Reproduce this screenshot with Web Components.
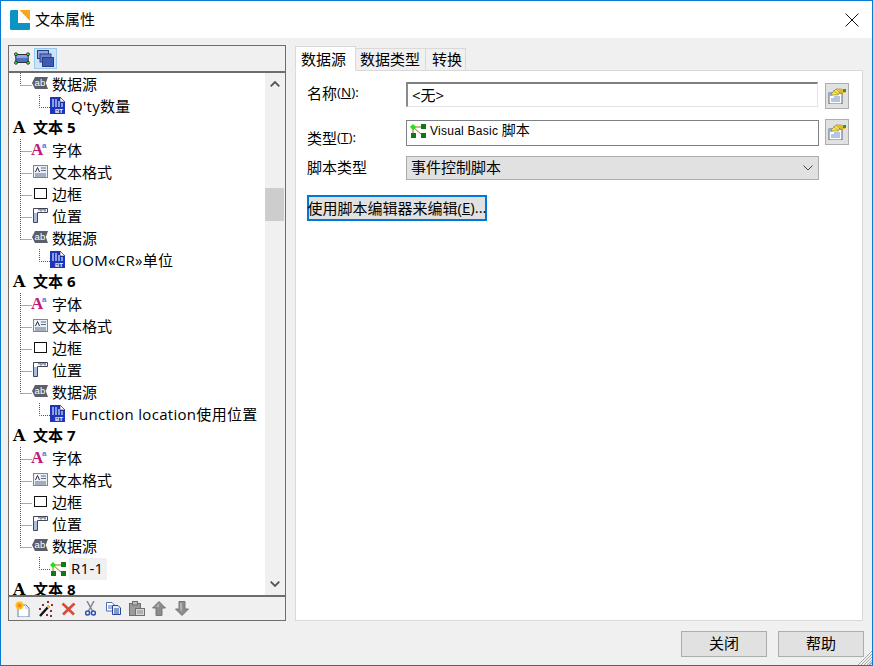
<!DOCTYPE html>
<html lang="zh">
<head>
<meta charset="utf-8">
<title>文本属性</title>
<style>
  html, body { margin: 0; padding: 0; background: #f0f0f0; }
  body { font: 15px "Open Sans", "Noto Sans CJK SC", sans-serif; color: #000; }
</style>
</head>
<body>

<script>
// icon drawings, all on a 16x16 box unless noted
const ICONS = {
  logo: `<svg width="20" height="20" viewBox="0 0 20 20"><rect width="20" height="20" rx="1.5" fill="#0b93c4"/><path d="M8 0H20V13H8Q8 13 8 12Z" fill="#fff"/><path d="M9.5 0H20V11Z" fill="#f5a623"/></svg>`,
  close: `<svg width="14" height="14" viewBox="0 0 14 14"><path d="M.5.5 13.5 13.5M13.5.5.5 13.5" stroke="#111" stroke-width="1" fill="none"/></svg>`,
  frame: `<svg width="16" height="13" viewBox="0 0 18 14"><rect x="2" y="2.5" width="14" height="9" fill="#4d6fc4"/><rect x="2" y="2.5" width="14" height="4" fill="#8ea6de"/><path d="M2 2.5H16V11.5H2Z" fill="none" stroke="#222"/><g fill="#3fe04a" stroke="#111" stroke-width=".8"><circle cx="2.2" cy="2.2" r="1.7"/><circle cx="15.8" cy="2.2" r="1.7"/><circle cx="2.2" cy="11.8" r="1.7"/><circle cx="15.8" cy="11.8" r="1.7"/></g></svg>`,
  stack: `<svg width="17" height="17" viewBox="0 0 17 17"><g stroke="#2b3f86"><rect x=".5" y=".5" width="11" height="8" fill="#8fa3dd"/><rect x="3" y="4" width="11" height="8" fill="#6a84cf"/><rect x="5.5" y="7.5" width="11" height="9" fill="#3d5ab5"/></g></svg>`,
  ab: `<svg width="16" height="12" viewBox="0 0 16 12"><path d="M3 0H16L13.8 6 16 12H3L0 6Z" fill="#5a5f6b"/><text x="2.6" y="9.2" font-family="'Liberation Sans',sans-serif" font-size="9.5" fill="#fff">ab</text></svg>`,
  doc: `<svg width="16" height="17" viewBox="0 0 16 17"><path d="M0 0H10L15 5V17H0Z" fill="#1c36b8"/><path d="M10 0 15 5H10Z" fill="#fff" stroke="#223" stroke-width=".6"/><path d="M3 2V10M6 2V10M9 4V10M12 6V10" stroke="#d8e2ff" stroke-width="1.2"/><text x="5" y="16" font-family="'Liberation Sans',sans-serif" font-size="6" font-weight="700" fill="#fff">BT</text></svg>`,
  script: `<svg width="16" height="14" viewBox="0 0 16 14"><path d="M3 3H13M3 3 12 11M3 3V11" stroke="#8a7a10" stroke-width="1" fill="none"/><path d="M3 0 6 3 3 6 0 3Z" fill="#19e619"/><rect x="11" y="0" width="5" height="5" fill="#0d7a17"/><rect x="1" y="9" width="5" height="5" fill="#0d7a17"/><rect x="11" y="9" width="5" height="5" fill="#0d7a17"/></svg>`,
  font: `<svg width="18" height="22" viewBox="0 0 18 22"><text x="0" y="17" font-family="'Liberation Serif',serif" font-size="17" font-weight="700" fill="#c2187a">A</text><text x="11" y="10" font-family="'Liberation Sans',sans-serif" font-size="8" font-weight="700" fill="#4a7be0">a</text></svg>`,
  format: `<svg width="15" height="13" viewBox="0 0 15 13"><rect x=".5" y=".5" width="14" height="12" fill="#e9eef7" stroke="#7d8798"/><rect x="2" y="2" width="5" height="5" fill="#fff"/><path d="M2.5 7 4.5 2.5 6.5 7" stroke="#223" fill="none"/><path d="M8 3H13M8 5.5H13M2 9H13M2 11H13" stroke="#5f6f8c"/></svg>`,
  border: `<svg width="13" height="11" viewBox="0 0 13 11"><rect x=".5" y=".5" width="12" height="10" fill="#fff" stroke="#111"/></svg>`,
  pos: `<svg width="15" height="15" viewBox="0 0 15 15"><path d="M.5.5H14.5V4.5H4.5V14.5H.5Z" fill="#fff" stroke="#2b3148" stroke-width=".9"/><path d="M6 .5V2.5M8 .5V3.5M10 .5V2.5M12 .5V3.5" stroke="#2b3148"/><rect x="1" y="5" width="3" height="9" fill="#a9bde0"/></svg>`,
  browse: `<svg width="18" height="16" viewBox="0 0 18 16"><rect x="1" y="5" width="13" height="11" fill="#fff" stroke="#5a6478"/><rect x="1" y="5" width="3.5" height="3" fill="#8fb3e0"/><path d="M6 9H12M3 11H12M3 13H12" stroke="#6e8cc0"/><path d="M3 6 8 1H14L10 7H5Z" fill="#f2e15c" stroke="#8a7a22" stroke-width=".6"/><path d="M5 2 11 7M8 1 13 6" stroke="#8a7a22" stroke-width=".5"/><path d="M9 1H14L18 2 17 5 13 5Z" fill="#e8b820"/><rect x="15" y="1" width="3" height="3" fill="#2f9a2f"/></svg>`,
  add: `<svg width="15" height="16" viewBox="0 0 15 16"><path d="M3 4H11L14 7V16H3Z" fill="#fff" stroke="#5f7fa8"/><path d="M10 4V8H14Z" fill="#cfe0f2"/><circle cx="4.5" cy="4.5" r="4" fill="#fbc21f"/><circle cx="4.5" cy="4.5" r="2" fill="#f28a1a"/></svg>`,
  wand: `<svg width="15" height="16" viewBox="0 0 15 16"><path d="M2 15 11 5" stroke="#111" stroke-width="2.4"/><path d="M9.5 6.5 11 5" stroke="#e8d84a" stroke-width="2.4"/><g fill="#8c2a3a"><rect x="4" y="3" width="2" height="2"/><rect x="9" y="0" width="2" height="2"/><rect x="13" y="3" width="2" height="2"/><rect x="12" y="9" width="2" height="2"/><rect x="1" y="7" width="2" height="2"/><rect x="8" y="13" width="2" height="2"/><rect x="12" y="14" width="2" height="2"/></g></svg>`,
  del: `<svg width="15" height="14" viewBox="0 0 15 14"><path d="M1.5 1.5 13 12.5M13.5 1.5 2 12.5" stroke="#d84a3c" stroke-width="2.6" fill="none"/></svg>`,
  cut: `<svg width="11" height="15" viewBox="0 0 11 15"><path d="M2 0 7.5 10M9 0 3.5 10" stroke="#7d8796" stroke-width="1.5"/><circle cx="2.6" cy="12" r="2" fill="none" stroke="#2f4fb5" stroke-width="1.5"/><circle cx="8.4" cy="12" r="2" fill="none" stroke="#2f4fb5" stroke-width="1.5"/></svg>`,
  copy: `<svg width="15" height="13" viewBox="0 0 15 13"><path d="M.5.5H6L8.5 3V9H.5Z" fill="#fff" stroke="#4a6fb5"/><path d="M2 4H6M2 6H6" stroke="#4a6fb5"/><path d="M6.5 3.5H12L14.5 6V12.5H6.5Z" fill="#e6eefa" stroke="#24459c"/><path d="M8 7H13M8 9H13M8 11H13" stroke="#24459c"/></svg>`,
  paste: `<svg width="16" height="15" viewBox="0 0 16 15"><rect x=".5" y="2.5" width="11" height="12" fill="#9b9b9b" stroke="#6e6e6e"/><rect x="3.5" y=".5" width="5" height="3.5" fill="#bbb" stroke="#6e6e6e"/><rect x="6.5" y="7.5" width="9" height="7" fill="#d6d6d6" stroke="#6e6e6e"/><path d="M8 10H14M8 12H14" stroke="#8a8a8a"/></svg>`,
  up: `<svg width="14" height="15" viewBox="0 0 14 15"><path d="M7 .5 13.5 7H10V14.5H4V7H.5Z" fill="#8c8c8c" stroke="#777"/><path d="M7 2 4 6H7Z" fill="#b5b5b5"/></svg>`,
  down: `<svg width="14" height="15" viewBox="0 0 14 15"><path d="M7 14.5 13.5 8H10V.5H4V8H.5Z" fill="#8c8c8c" stroke="#777"/><path d="M5 2H7V11L5 8Z" fill="#b5b5b5"/></svg>`,
  chevUp: `<svg width="10" height="6" viewBox="0 0 10 6"><path d="M.7 5.3 5 1 9.3 5.3" fill="none" stroke="#555" stroke-width="1.8"/></svg>`,
  chevDown: `<svg width="10" height="6" viewBox="0 0 10 6"><path d="M.7.7 5 5 9.3.7" fill="none" stroke="#555" stroke-width="1.8"/></svg>`,
  caret: `<svg width="10" height="6" viewBox="0 0 10 6"><path d="M.5.5 5 5 9.5.5" fill="none" stroke="#444"/></svg>`
};

class XIcon extends HTMLElement {
  connectedCallback() {
    const shadow = this.shadowRoot || this.attachShadow({ mode: "open" });
    shadow.innerHTML = `<style>:host{display:inline-flex;align-items:center;justify-content:center;flex:none;line-height:0}</style>${ICONS[this.getAttribute("name")] || ""}`;
  }
}
customElements.define("x-icon", XIcon);

class DlgWindow extends HTMLElement {
  constructor() {
    super();
    this.attachShadow({ mode: "open" }).innerHTML = `
      <style>
        :host { display: flex; flex-direction: column; position: relative; width: 873px; height: 666px; box-sizing: border-box;
                border: 1px solid #0a7ad1; background: #f0f0f0; overflow: hidden; }
        .title { display: flex; align-items: center; height: 37px; background: #fff; padding-left: 9px; flex: none; }
        .title span { margin-left: 5px; font-size: 15px; padding-bottom: 2px; }
        .title .x { margin-left: auto; margin-right: 13px; }
        .body { flex: 1; display: flex; gap: 9px; padding: 7px 9px 0 7px; min-height: 0; }
        .foot { display: flex; justify-content: flex-end; gap: 11px; height: 44px; padding: 10px 8px 0 0; box-sizing: border-box; flex: none; }
        .grip { position: absolute; right: 0; bottom: 0; width: 15px; height: 15px;
                background: repeating-linear-gradient(135deg, transparent 0 1px, #a8a8a8 1px 2px);
                clip-path: polygon(100% 0, 100% 100%, 0 100%); }
      </style>
      <div class="title"><x-icon name="logo"></x-icon><span><slot name="caption"></slot></span><x-icon class="x" name="close"></x-icon></div>
      <div class="body"><slot name="left"></slot><slot name="right"></slot></div>
      <div class="foot"><slot name="foot"></slot></div>
      <div class="grip"></div>`;
  }
}
customElements.define("dlg-window", DlgWindow);

class TreePanel extends HTMLElement {
  constructor() {
    super();
    this.attachShadow({ mode: "open" }).innerHTML = `
      <style>
        :host { display: flex; flex-direction: column; width: 278px; height: 576px; box-sizing: border-box; border: 1px solid #6d6d6d; background: #f0f0f0; flex: none; }
        .top { height: 25px; display: flex; align-items: center; padding-left: 5px; gap: 4px; border-bottom: 2px solid #6d6d6d; flex: none; }
        .sel { width: 23px; height: 21px; background: #cce4f7; border: 1px solid #99c9ef; box-sizing: border-box; display: flex; align-items: center; justify-content: center; }
        .mid { flex: 1; display: flex; min-height: 0; background: #fff; }
        .tree { flex: 1; overflow: hidden; }
        .bar { width: 20px; background: #f0f0f0; display: flex; flex-direction: column; align-items: center; flex: none; padding-right: 1px; box-sizing: border-box; }
        .thumb { width: 100%; height: 33px; background: #cdcdcd; margin-top: 101px; }
        .bar .a { margin-top: 8px; }
        .bar .b { margin-top: auto; margin-bottom: 8px; }
        .bot { height: 23px; display: flex; align-items: center; border-top: 2px solid #6d6d6d; flex: none; padding-left: 2px; }
        .bot x-icon { width: 22.85px; }
      </style>
      <div class="top"><x-icon name="frame"></x-icon><div class="sel"><x-icon name="stack"></x-icon></div></div>
      <div class="mid">
        <div class="tree"><slot></slot></div>
        <div class="bar"><x-icon class="a" name="chevUp"></x-icon><div class="thumb"></div><x-icon class="b" name="chevDown"></x-icon></div>
      </div>
      <div class="bot">
        <x-icon name="add"></x-icon><x-icon name="wand"></x-icon><x-icon name="del"></x-icon><x-icon name="cut"></x-icon>
        <x-icon name="copy"></x-icon><x-icon name="paste"></x-icon><x-icon name="up"></x-icon><x-icon name="down"></x-icon>
      </div>`;
  }
}
customElements.define("tree-panel", TreePanel);

// level 0 = bold heading, 1 = property, 2 = value under it
class TreeRow extends HTMLElement {
  connectedCallback() {
    const level = +this.getAttribute("level");
    const icon = this.getAttribute("icon");
    const last = this.hasAttribute("last");
    const sel = this.hasAttribute("selected");
    let lead = "";
    if (level === 1) {
      lead = `<svg width="23" height="22"><path d="M11.5 0V${last ? 12.5 : 22}M11.5 12.5H22.5" stroke="#555" stroke-dasharray="1 1" fill="none"/></svg>`;
    } else if (level === 2) {
      lead = `<svg width="41" height="22"><path d="M30.5 0V12.5H41" stroke="#555" stroke-dasharray="1 1" fill="none"/></svg>`;
    } else {
      lead = `<span class="bigA">A</span>`;
    }
    this.attachShadow({ mode: "open" }).innerHTML = `
      <style>
        :host { display: flex; align-items: center; height: 22px; white-space: nowrap; }
        svg { flex: none; }
        .bigA { font: 700 16px "DejaVu Serif", serif; width: 24px; padding-left: 4px; box-sizing: border-box; flex: none; margin-bottom: 2px; }
        .ic { width: 16px; display: flex; justify-content: center; flex: none; ${sel ? "margin-top: 2px;" : "margin-bottom: 2px;"} }
        .t { margin-left: ${level === 2 ? 5 : 4}px; margin-bottom: 2px; ${level === 2 ? "letter-spacing: .3px;" : ""} }
        .h { font-weight: 700; margin-left: 0; margin-bottom: 4px; }
        .sel { background: #f0f0f0; height: 22px; line-height: 20px; padding: 0 4px 0 2px; margin: 2px 0 0 3px; }
      </style>
      ${lead}${icon ? `<div class="ic"><x-icon name="${icon}"></x-icon></div>` : ""}
      <span class="t ${level === 0 ? "h" : ""} ${sel ? "sel" : ""}"><slot></slot></span>`;
  }
}
customElements.define("tree-row", TreeRow);

class TabPanel extends HTMLElement {
  constructor() {
    super();
    this.attachShadow({ mode: "open" }).innerHTML = `
      <style>
        :host { display: flex; flex-direction: column; width: 568px; height: 575px; margin-top: 1px; flex: none; }
        .tabs { display: flex; align-items: flex-end; height: 25px; flex: none; margin-bottom: -1px; position: relative; }
        .page { flex: 1; background: #fff; border: 1px solid #d9d9d9; padding: 11px 11px 0 11px; box-sizing: border-box; }
      </style>
      <div class="tabs"><slot name="tabs"></slot></div>
      <div class="page"><slot></slot></div>`;
  }
}
customElements.define("tab-panel", TabPanel);

class TabItem extends HTMLElement {
  connectedCallback() {
    const on = this.hasAttribute("active");
    const pad = this.getAttribute("pad") || "0 5px 0 4px";
    this.attachShadow({ mode: "open" }).innerHTML = `
      <style>
        :host { display: block; box-sizing: border-box; height: ${on ? 25 : 23}px; line-height: ${on ? 24 : 21}px;
                padding: ${pad}; margin-left: ${on ? 0 : -1}px; border: 1px solid #d9d9d9;
                background: ${on ? "#fff" : "#f0f0f0"}; ${on ? "border-bottom-color:#fff;position:relative;z-index:1;" : ""} white-space: nowrap; }
      </style><slot></slot>`;
  }
}
customElements.define("tab-item", TabItem);

class FormGrid extends HTMLElement {
  constructor() {
    super();
    this.attachShadow({ mode: "open" }).innerHTML = `
      <style>
        :host { display: grid; grid-template-columns: 99px 413px 24px; grid-template-rows: 27px 27px 24px; row-gap: 10px; }
      </style><slot></slot>`;
  }
}
customElements.define("form-grid", FormGrid);

class PropLabel extends HTMLElement {
  constructor() {
    super();
    this.attachShadow({ mode: "open" }).innerHTML = `<style>:host{display:flex;align-items:center;align-self:start;height:22px;white-space:nowrap;grid-column:1;margin-top:-1px}</style><slot></slot>`;
  }
}
customElements.define("prop-label", PropLabel);

class PropBox extends HTMLElement {
  connectedCallback() {
    const kind = this.getAttribute("kind");
    const css = {
      input: "border:1px solid #e3e3e3;border-top:2px solid #7f7f7f;border-left:2px solid #8a8a8a;background:#fff;width:412px;height:25px;padding:0 0 2px 4px;align-items:center;",
      type: "border:1px solid #7e8286;background:#fff;margin-top:1px;align-items:flex-start;padding:1px 0 0 3px;",
      select: "border:1px solid #adadad;background:#e1e1e1;align-items:center;padding:0 0 4px 4px;"
    }[kind];
    this.attachShadow({ mode: "open" }).innerHTML = `
      <style>
        :host { display: flex; box-sizing: border-box; min-width: 0; grid-column: 2; ${css} }
        x-icon.c { margin-left: auto; margin-right: 5px; margin-top: 4px; }
      </style><slot></slot>${kind === "select" ? `<x-icon class="c" name="caret"></x-icon>` : ""}`;
  }
}
customElements.define("prop-box", PropBox);

class SideBtn extends HTMLElement {
  constructor() {
    super();
    this.attachShadow({ mode: "open" }).innerHTML = `
      <style>:host{display:flex;align-items:center;justify-content:center;box-sizing:border-box;width:24px;height:26px;border:1px solid #adadad;background:#e1e1e1;grid-column:3;margin-left:6px}</style>
      <x-icon name="browse"></x-icon>`;
  }
}
customElements.define("side-btn", SideBtn);

class PushBtn extends HTMLElement {
  connectedCallback() {
    const focus = this.hasAttribute("focused");
    this.attachShadow({ mode: "open" }).innerHTML = `
      <style>:host{display:flex;align-items:center;justify-content:center;box-sizing:border-box;background:#e1e1e1;white-space:nowrap;flex:none;
        ${focus ? "width:180px;height:26px;border:2px solid #0078d7;margin-top:15px;padding-bottom:2px;" : "width:86px;height:26px;border:1px solid #adadad;padding-bottom:4px;"}}</style><slot></slot>`;
  }
}
customElements.define("push-btn", PushBtn);
</script>

<dlg-window>
  <span slot="caption">文本属性</span>

  <tree-panel slot="left" id="tree"></tree-panel>

  <tab-panel slot="right">
    <tab-item slot="tabs" active pad="0 9px 0 5px">数据源</tab-item>
    <tab-item slot="tabs">数据类型</tab-item>
    <tab-item slot="tabs" pad="0 3px 0 6px">转换</tab-item>

    <form-grid>
      <prop-label>名称<span style="font-size:13.5px">(<u>N</u>):</span></prop-label>
      <prop-box kind="input">&lt;无&gt;</prop-box>
      <side-btn style="margin-top:1px"></side-btn>
      <prop-label style="margin-top:7px">类型<span style="font-size:13.5px">(<u>T</u>):</span></prop-label>
      <prop-box kind="type"><x-icon name="script" style="margin:2px 4px 0 0"></x-icon><span style="font:12px 'Liberation Sans','Noto Sans CJK SC',sans-serif;line-height:16px;letter-spacing:.25px">Visual Basic <span style="font-size:14px;letter-spacing:0">脚本</span></span></prop-box>
      <side-btn></side-btn>
      <prop-label>脚本类型</prop-label>
      <prop-box kind="select">事件控制脚本</prop-box>
    </form-grid>
    <push-btn focused>使用脚本编辑器来编辑(<u>E</u>)...</push-btn>
  </tab-panel>

  <push-btn slot="foot">关闭</push-btn>
  <push-btn slot="foot">帮助</push-btn>
</dlg-window>

<script>
const propRows = value => [
  [1, "font", "字体"], [1, "format", "文本格式"], [1, "border", "边框"], [1, "pos", "位置"],
  [1, "ab", "数据源", true], [2, value[0], value[1]]
];
const rows = [
  [1, "ab", "数据源", true], [2, "doc", "Q'ty数量"],
  [0, "", "文本 5"], ...propRows(["doc", "UOM«CR»单位"]),
  [0, "", "文本 6"], ...propRows(["doc", "Function location使用位置"]),
  [0, "", "文本 7"], ...propRows(["script", "R1-1"]),
  [0, "", "文本 8"]
];
const tree = document.getElementById("tree");
for (const [level, icon, text, last] of rows) {
  const row = document.createElement("tree-row");
  row.setAttribute("level", level);
  if (icon) row.setAttribute("icon", icon);
  if (last) row.setAttribute("last", "");
  if (text === "R1-1") row.setAttribute("selected", "");
  row.textContent = text;
  tree.appendChild(row);
}
</script>
</body>
</html>
